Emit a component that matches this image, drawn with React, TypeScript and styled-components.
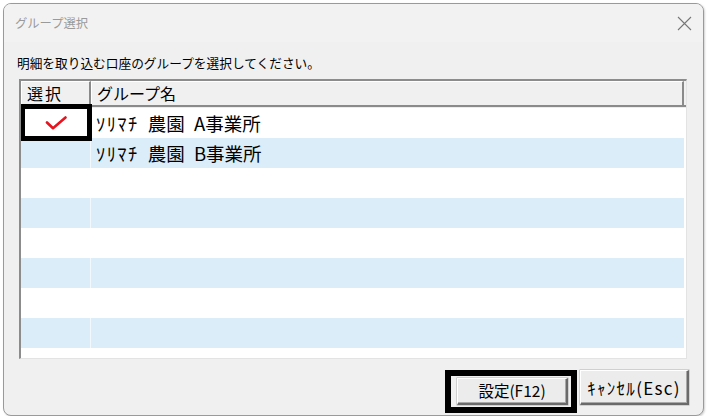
import React from "react";
import styled, { createGlobalStyle } from "styled-components";

const Global = createGlobalStyle`
  html, body { margin: 0; padding: 0; background: #ffffff; }
  body { font-family: "Noto Sans CJK JP", "Noto Sans", sans-serif; }
  * { box-sizing: border-box; }
`;

const Window = styled.div`
  margin: 3px 0 0 3px;
  width: 701px;
  height: 413px;
  border: 1px solid #9a9a9a;
  border-radius: 8px;
  background: #f0f0f0;
  box-shadow: 1px 1px 2px rgba(0, 0, 0, 0.18);
  display: flex;
  flex-direction: column;
  overflow: hidden;
`;

const TitleBar = styled.div`
  height: 38px;
  flex: none;
  display: flex;
  align-items: center;
  justify-content: space-between;
  padding: 0 11px 0 11px;
  background: #f2f2f2;
`;

const Title = styled.span`
  font-size: 12.3px;
  color: #9a9a9a;
  line-height: 1;
  padding-top: 1px;
`;

const Body = styled.div`
  flex: 1;
  display: flex;
  flex-direction: column;
  padding: 0 16px 0 15px;
`;

const Instruction = styled.div`
  margin: 13px 0 8px -2px;
  height: 16px;
  line-height: 16px;
  font-size: 12.7px;
  color: #000;
  white-space: nowrap;
`;

const ListBox = styled.div`
  position: relative;
  height: 280px;
  flex: none;
  background: #ffffff;
  border-top: 2px solid #8c8c8c;
  border-left: 2px solid #8c8c8c;
  border-right: 1px solid #e3e3e3;
  border-bottom: 1px solid #e3e3e3;
  overflow: hidden;
  display: flex;
  flex-direction: column;
`;

const HeaderRow = styled.div`
  height: 27px;
  flex: none;
  display: flex;
  background: #f0f0f0;
  border-bottom: 1px solid #ececec;
`;

const HeaderCell = styled.div<{ $w?: number; $spacing?: number }>`
  ${(p) => (p.$w ? `width: ${p.$w}px; flex: none;` : `flex: 1;`)}
  height: 100%;
  border-top: 1px solid #ffffff;
  border-left: 1px solid #ffffff;
  border-right: 2px solid #8a8a8a;
  border-bottom: 2px solid #8a8a8a;
  padding-left: 5px;
  font-size: 16px;
  letter-spacing: ${(p) => p.$spacing ?? 0}px;
  line-height: 23px;
  color: #000;
  white-space: nowrap;
`;

const HeaderTail = styled.div`
  width: 2px;
  flex: none;
  border-bottom: 2px solid #8a8a8a;
`;

const Row = styled.div<{ $alt: boolean }>`
  height: 30px;
  flex: none;
  margin-right: 2px;
  display: flex;
  background: ${(p) => (p.$alt ? "#daedf8" : "#ffffff")};
`;

const SelCell = styled.div<{ $alt: boolean }>`
  width: 70px;
  flex: none;
  display: flex;
  align-items: center;
  justify-content: center;
  border-right: 1px solid ${(p) => (p.$alt ? "#f2f9fd" : "#ffffff")};
`;

const NameCell = styled.div`
  flex: 1;
  padding-left: 5px;
  font-size: 18.5px;
  word-spacing: 5px;
  line-height: 30px;
  color: #000;
  white-space: nowrap;
`;

const Kana = styled.span`
  letter-spacing: 1.4px;
`;

const CellFrame = styled.div`
  position: absolute;
  left: -1px;
  top: 23px;
  width: 72px;
  height: 37px;
  border: 5px solid #000;
  pointer-events: none;
`;

const ButtonRow = styled.div`
  margin-top: 10px;
  height: 36px;
  display: flex;
  justify-content: flex-end;
  align-items: flex-end;
  gap: 12px;
  margin-right: -2px;
`;

const DefaultWrap = styled.div`
  position: relative;
  display: flex;
`;

const ButtonFrame = styled.div`
  position: absolute;
  left: -12px;
  top: -8px;
  width: 132px;
  height: 43px;
  border: 6px solid #000;
  pointer-events: none;
`;

const Button = styled.button<{ $w: number; $h: number; $spacing?: number; $size?: number }>`
  width: ${(p) => p.$w}px;
  height: ${(p) => p.$h}px;
  padding: 0;
  margin: 0;
  background: #ececec;
  border-top: 1px solid #ffffff;
  border-left: 1px solid #ffffff;
  border-right: 2px solid #6a6a6a;
  border-bottom: 2px solid #6a6a6a;
  box-shadow: inset -1px -1px 0 #a8a8a8, 0 0 0 0.5px #b0b0b0;
  font-family: "Noto Sans CJK JP", "Noto Sans", sans-serif;
  font-size: ${(p) => p.$size ?? 15}px;
  letter-spacing: ${(p) => p.$spacing ?? 0}px;
  color: #000;
  line-height: 1;
  display: flex;
  align-items: center;
  justify-content: center;
  white-space: nowrap;
`;

const CloseIcon = () => (
  <svg width="15" height="15" viewBox="0 0 15 15">
    <path d="M1 1 L14 14 M14 1 L1 14" stroke="#777" strokeWidth="1.1" fill="none" />
  </svg>
);

const CheckMark = () => (
  <svg width="22" height="14" viewBox="0 0 22 14">
    <path
      d="M2 6.5 L8 12.2 L20.5 1.5"
      stroke="#e5141e"
      strokeWidth="2.6"
      fill="none"
      strokeLinecap="round"
      strokeLinejoin="round"
    />
  </svg>
);

const rows = [
  { kana: "ｿﾘﾏﾁ", rest: " 農園 A事業所", checked: true },
  { kana: "ｿﾘﾏﾁ", rest: " 農園 B事業所", checked: false },
  ...Array.from({ length: 7 }, () => ({ kana: "", rest: "", checked: false })),
];

export default function App() {
  return (
    <>
      <Global />
      <Window>
        <TitleBar>
          <Title>グループ選択</Title>
          <CloseIcon />
        </TitleBar>
        <Body>
          <Instruction>明細を取り込む口座のグループを選択してください。</Instruction>
          <ListBox>
            <HeaderRow>
              <HeaderCell $w={70} $spacing={2}>選択</HeaderCell>
              <HeaderCell>グループ名</HeaderCell>
              <HeaderTail />
            </HeaderRow>
            {rows.map((r, i) => (
              <Row key={i} $alt={i % 2 === 1}>
                <SelCell $alt={i % 2 === 1}>{r.checked && <CheckMark />}</SelCell>
                <NameCell>
                  {r.kana && <Kana>{r.kana}</Kana>}
                  {r.rest}
                </NameCell>
              </Row>
            ))}
            <CellFrame />
          </ListBox>
          <ButtonRow>
            <DefaultWrap>
              <Button $w={111} $h={27} $size={15.5}>設定(F12)</Button>
              <ButtonFrame />
            </DefaultWrap>
            <Button $w={109} $h={35} $spacing={1.3} $size={17}>ｷｬﾝｾﾙ(Esc)</Button>
          </ButtonRow>
        </Body>
      </Window>
    </>
  );
}
